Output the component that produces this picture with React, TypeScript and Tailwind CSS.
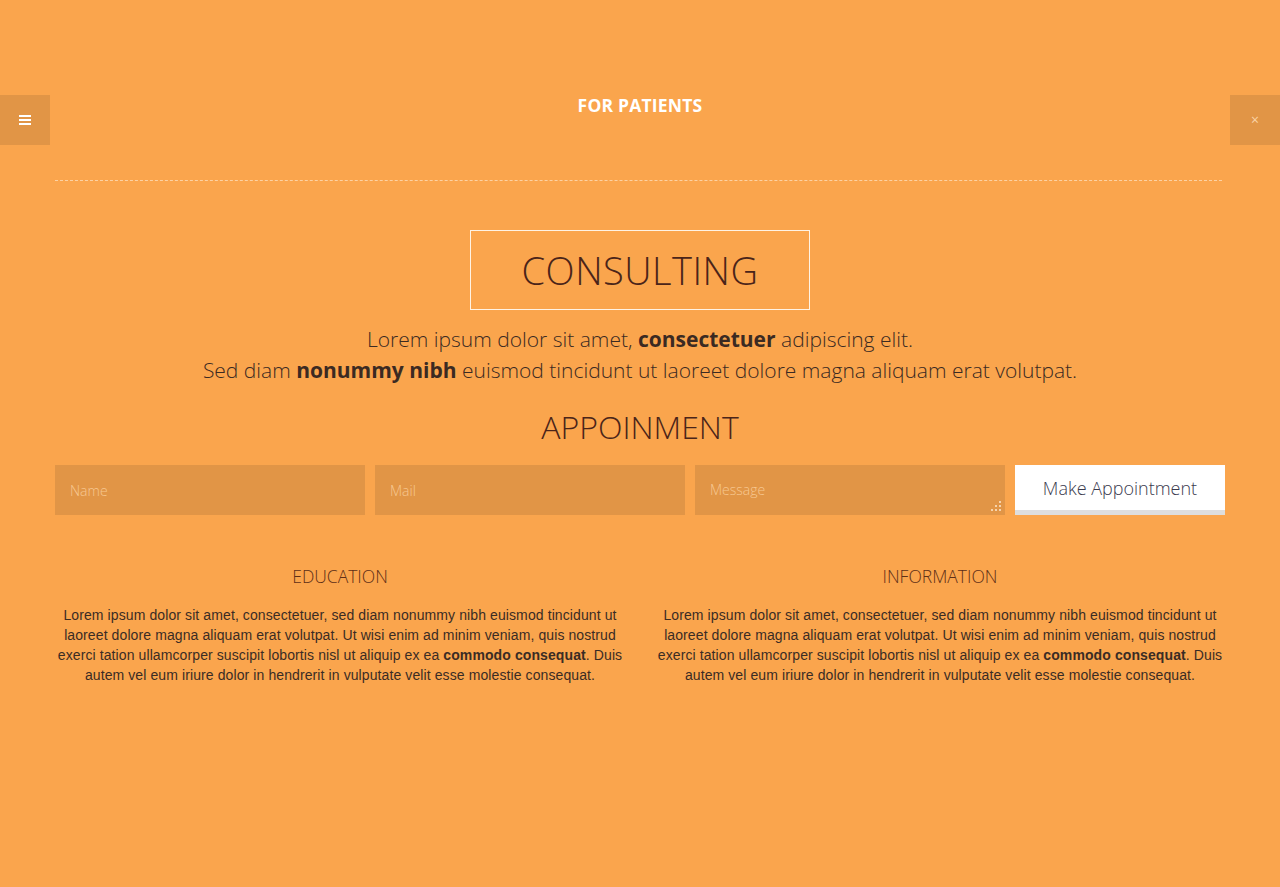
import React from "react";

const para =
  "Lorem ipsum dolor sit amet, consectetuer, sed diam nonummy nibh euismod tincidunt ut laoreet dolore magna aliquam erat volutpat. Ut wisi enim ad minim veniam, quis nostrud exerci tation ullamcorper suscipit lobortis nisl ut aliquip ex ea ";

function Column({ title }: { title: string }) {
  return (
    <div className="flex flex-col items-center px-[15px]">
      <h3 className="text-[17.5px] leading-[24px] font-light text-[#5e2f17]" style={{ fontFamily: '"Open Sans", sans-serif' }}>
        {title}
      </h3>
      <p className="mt-[17px] text-center text-[14px] leading-[20px] tracking-[0.1px] text-[#3a2c24]" style={{ fontFamily: '"Liberation Sans", Arial, sans-serif' }}>
        {para}
        <b>commodo consequat</b>. Duis autem vel eum iriure dolor in hendrerit in vulputate velit esse molestie consequat.
      </p>
    </div>
  );
}

function Grip() {
  const dots: [number, number][] = [
    [8, 0],
    [4, 4],
    [8, 4],
    [0, 8],
    [4, 8],
    [8, 8],
  ];
  return (
    <svg className="absolute right-[3px] bottom-[3px]" width="11" height="11" viewBox="0 0 11 11">
      {dots.map(([x, y], i) => (
        <rect key={i} x={x} y={y} width="2" height="2" fill="#f6d3ab" />
      ))}
    </svg>
  );
}

export default function App() {
  return (
    <div className="min-h-[887px] w-full bg-[#faa54d] relative" style={{ fontFamily: '"Open Sans", sans-serif' }}>
      <div className="h-[95px]" />
      <div className="flex justify-between items-start h-[50px]">
        <button className="w-[50px] h-[50px] bg-[#e19546] flex flex-col items-center justify-center gap-[2px]">
          <span className="block w-[12px] h-[2px] bg-white" />
          <span className="block w-[12px] h-[2px] bg-white" />
          <span className="block w-[12px] h-[2px] bg-white" />
        </button>
        <h1 className="text-white font-bold text-[17.5px] leading-[20px] mt-0 tracking-[0.2px]">FOR PATIENTS</h1>
        <button className="w-[50px] h-[50px] bg-[#e19546] flex items-center justify-center text-[#fbd4a6] text-[14px] leading-none">
          ×
        </button>
      </div>
      <div className="ml-[55px] mr-[58px] mt-[35px] border-t border-dashed border-[#fcd2a3]" />
      <div className="w-[1170px] mx-auto flex flex-col items-center">
        <div className="mt-[49px] w-[340px] h-[80px] border border-[#fff3e4] flex items-center justify-center">
          <span className="text-[38px] font-light text-[#4a2419] leading-none tracking-[0.5px]">CONSULTING</span>
        </div>
        <p className="mt-[14px] text-[21px] leading-[31px] font-light text-[#3b2a22] text-center">
          Lorem ipsum dolor sit amet, <b className="font-bold">consectetuer</b> adipiscing elit.
          <br />
          Sed diam <b className="font-bold">nonummy nibh</b> euismod tincidunt ut laoreet dolore magna aliquam erat volutpat.
        </p>
        <h2 className="mt-[21px] text-[32px] leading-[40px] font-light text-[#4a2419]">APPOINMENT</h2>
        <form className="mt-[18px] w-full flex gap-[10px]" onSubmit={(e) => e.preventDefault()}>
          <input
            placeholder="Name"
            className="w-[310px] h-[50px] bg-[#e19546] px-[15px] text-[14px] font-light text-white placeholder:text-[#f7c892] outline-none"
          />
          <input
            placeholder="Mail"
            className="w-[310px] h-[50px] bg-[#e19546] px-[15px] text-[14px] font-light text-white placeholder:text-[#f7c892] outline-none"
          />
          <div className="relative w-[310px] h-[50px]">
            <textarea
              placeholder="Message"
              className="block w-full h-full resize-none bg-[#e19546] px-[15px] py-[15px] text-[14px] leading-[20px] font-light text-white placeholder:text-[#f7c892] outline-none"
            />
            <Grip />
          </div>
          <button className="w-[210px] h-[50px] bg-white border-b-[5px] border-[#dedede] text-[18px] font-light text-[#3a3a4e] pt-[1px]">
            Make Appointment
          </button>
        </form>
        <div className="mt-[49px] w-[1200px] grid grid-cols-2">
          <Column title="EDUCATION" />
          <Column title="INFORMATION" />
        </div>
      </div>
    </div>
  );
}
